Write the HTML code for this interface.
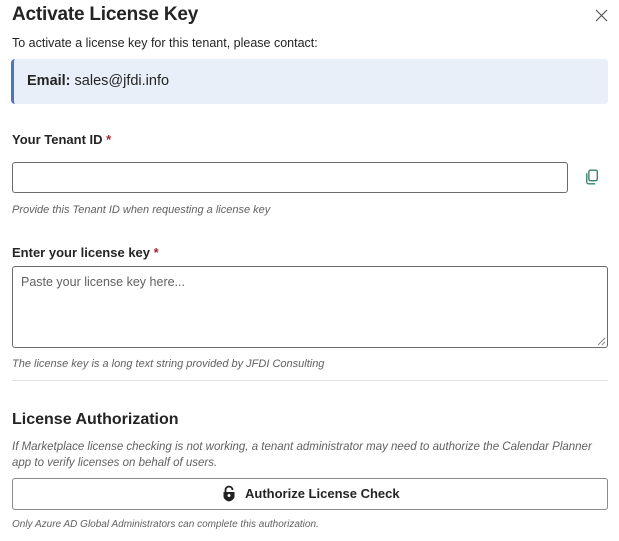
<!DOCTYPE html>
<html><head><meta charset="utf-8"><style>
*{box-sizing:border-box;margin:0;padding:0}
body{width:619px;height:541px;background:#fff;font-family:"Liberation Sans",sans-serif;color:#242424;position:relative;overflow:hidden}
.a{position:absolute;white-space:nowrap}
.lbl{font-size:13px;font-weight:bold;color:#242424}
.req{color:#a4262c}
.help{font-size:11px;font-style:italic;color:#616161}
</style></head><body>
<div class="a" style="left:12px;top:4px;font-size:19px;font-weight:bold;letter-spacing:-0.2px">Activate License Key</div>
<svg class="a" style="left:595px;top:9px" width="13" height="13" viewBox="0 0 13 13"><path d="M1 1L12 12M12 1L1 12" stroke="#555" stroke-width="1.2"/></svg>
<div class="a" style="left:12px;top:36px;font-size:12.5px">To activate a license key for this tenant, please contact:</div>
<div class="a" style="left:11px;top:59px;width:597px;height:45px;background:#e9eff8;border-left:3px solid #4a78b8;border-radius:4px"></div>
<div class="a" style="left:27px;top:73px;font-size:14.5px"><b>Email:</b> sales@jfdi.info</div>
<div class="a lbl" style="left:12px;top:132px">Your Tenant ID <span class="req">*</span></div>
<div class="a" style="left:12px;top:162px;width:556px;height:31px;border:1px solid #6b6b6b;border-radius:3px"></div>
<svg class="a" style="left:582px;top:167px" width="19" height="20" viewBox="0 0 18 18" fill="none" stroke="#3b8068" stroke-width="1.3"><rect x="6.5" y="2.5" width="8" height="10" rx="1.5"/><path d="M4.5 5.5v8a2 2 0 0 0 2 2h6"/></svg>
<div class="a help" style="left:12px;top:204px">Provide this Tenant ID when requesting a license key</div>
<div class="a lbl" style="left:12px;top:245px">Enter your license key <span class="req">*</span></div>
<div class="a" style="left:12px;top:266px;width:596px;height:82px;border:1px solid #6b6b6b;border-radius:3px"></div>
<div class="a" style="left:21px;top:275px;font-size:12.5px;color:#616161">Paste your license key here...</div>
<svg class="a" style="left:597px;top:337px" width="9" height="9"><path d="M8 1L1 8M8 5L5 8" stroke="#888"/></svg>
<div class="a help" style="left:12px;top:358px">The license key is a long text string provided by JFDI Consulting</div>
<div class="a" style="left:12px;top:380px;width:596px;height:1px;background:#e3e3e3"></div>
<div class="a" style="left:12px;top:411px;font-size:16px;font-weight:bold">License Authorization</div>
<div class="a help" style="left:12px;top:439px;font-size:11.5px;line-height:16px">If Marketplace license checking is not working, a tenant administrator may need to authorize the Calendar Planner<br>app to verify licenses on behalf of users.</div>
<div class="a" style="left:12px;top:478px;width:596px;height:32px;border:1px solid #8a8a8a;border-radius:3px"></div>
<svg class="a" style="left:222px;top:485px" width="14" height="17" viewBox="0 0 14 17"><path d="M3.5 7V5a3.5 3.5 0 0 1 7 0" fill="none" stroke="#222" stroke-width="1.8"/><path d="M1.5 7h11v4.5c0 2.5-3 4.5-5.5 5-2.5-.5-5.5-2.5-5.5-5z" fill="#222"/><circle cx="7" cy="10.5" r="1.5" fill="#fff"/></svg>
<div class="a" style="left:245px;top:486px;font-size:13px;font-weight:bold;color:#242424">Authorize License Check</div>
<div class="a help" style="left:12px;top:519px;font-size:10px">Only Azure AD Global Administrators can complete this authorization.</div>
</body></html>
